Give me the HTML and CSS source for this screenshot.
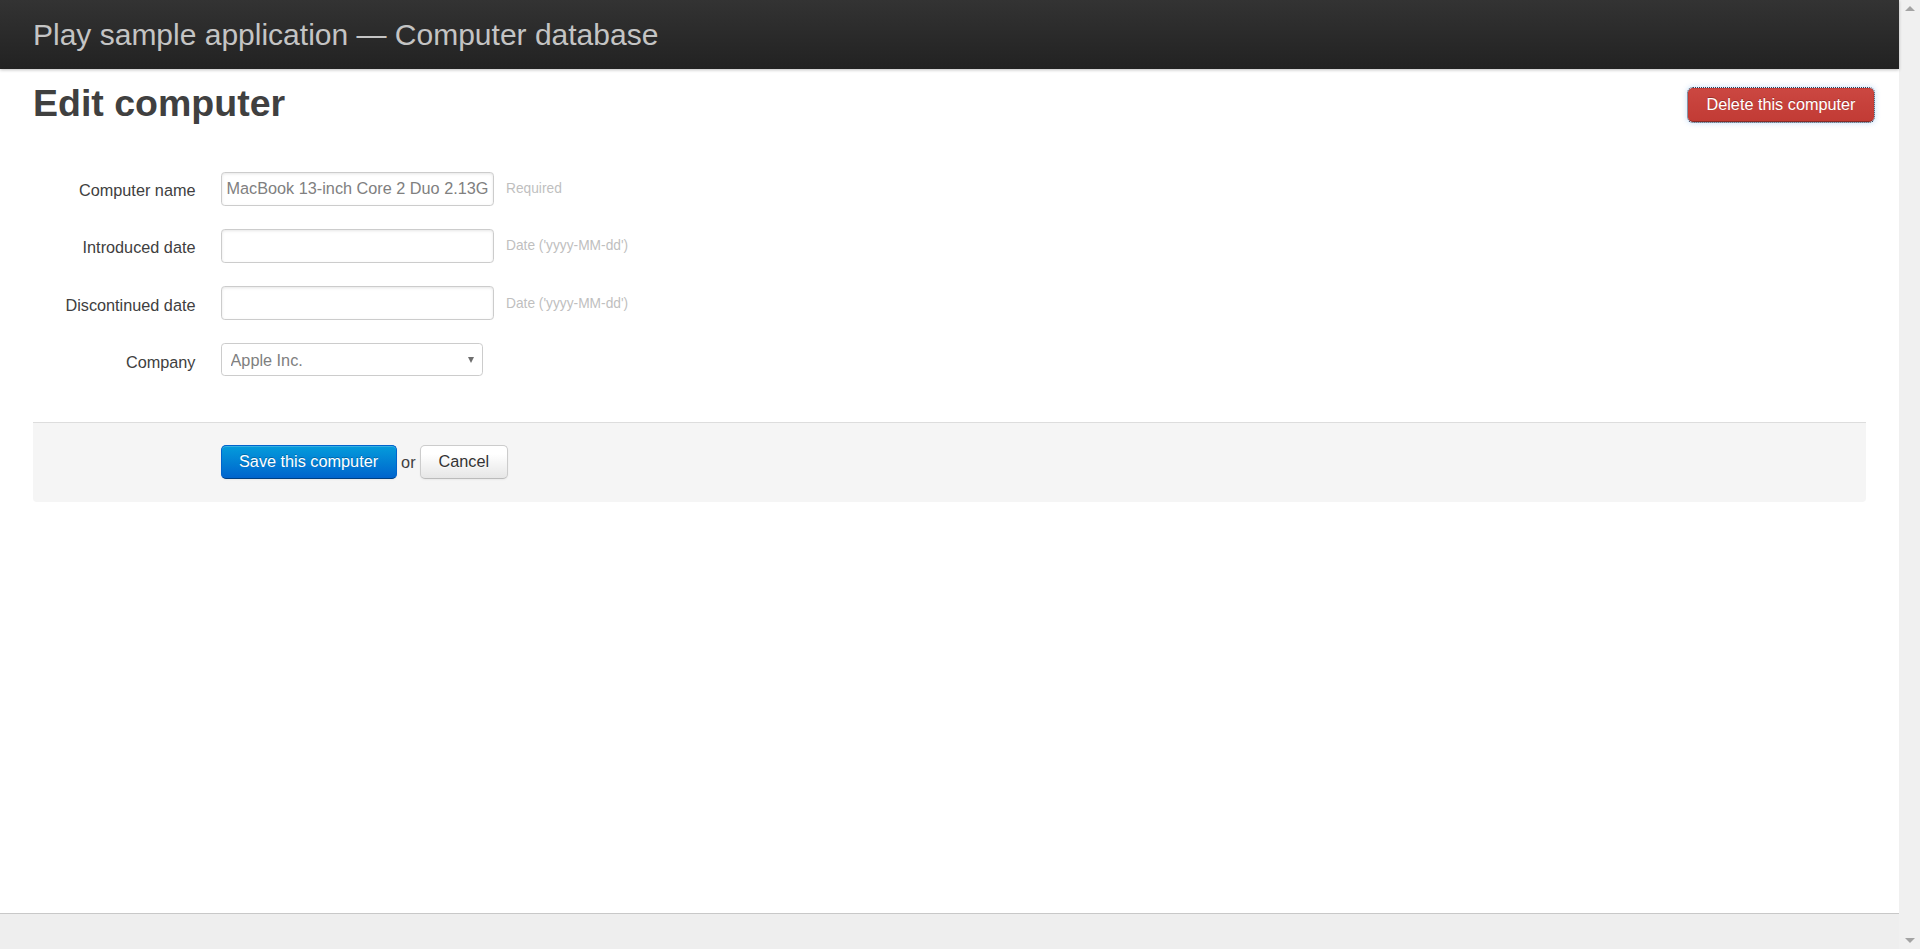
FILE: index.html
```html
<!DOCTYPE html>
<html lang="en">
<head>
<meta charset="utf-8">
<title>Computers database</title>
<link rel="stylesheet" href="styles.css">
</head>
<body>
<div class="page">
  <header class="topbar">
    <h1 class="brand">Play sample application — Computer database</h1>
  </header>
  <main class="main">
    <div class="title-row">
      <h1 class="page-title">Edit computer</h1>
      <form class="delete-form">
        <button type="button" class="btn danger focused">Delete this computer</button>
      </form>
    </div>
    <form class="edit-form">
      <fieldset class="fields">
        <div class="field-row">
          <label class="field-label" for="name">Computer name</label>
          <div class="field-input">
            <input class="text-input" type="text" id="name" value="MacBook 13-inch Core 2 Duo 2.13GHz">
            <span class="help-inline">Required</span>
          </div>
        </div>
        <div class="field-row">
          <label class="field-label" for="introduced">Introduced date</label>
          <div class="field-input">
            <input class="text-input" type="text" id="introduced" value="">
            <span class="help-inline">Date ('yyyy-MM-dd')</span>
          </div>
        </div>
        <div class="field-row">
          <label class="field-label" for="discontinued">Discontinued date</label>
          <div class="field-input">
            <input class="text-input" type="text" id="discontinued" value="">
            <span class="help-inline">Date ('yyyy-MM-dd')</span>
          </div>
        </div>
        <div class="field-row">
          <label class="field-label" for="company">Company</label>
          <div class="field-input">
            <div class="select-wrap">
              <select class="select-input" id="company">
                <option>Apple Inc.</option>
              </select>
              <span class="select-arrow"></span>
            </div>
          </div>
        </div>
      </fieldset>
      <div class="actions">
        <button type="button" class="btn primary">Save this computer</button> <span class="or">or</span> <button type="button" class="btn">Cancel</button>
      </div>
    </form>
  </main>
  <footer class="bottombar"></footer>
</div>
<div class="scrollbar">
  <span class="sb-arrow sb-up"></span>
  <span class="sb-arrow sb-down"></span>
</div>
</body>
</html>
```

FILE: styles.css
```css
html, body {
  margin: 0;
  padding: 0;
  height: 100%;
}
body {
  display: flex;
  flex-direction: row;
  font-family: "Liberation Sans", Arial, sans-serif;
  font-size: 16.25px;
  color: #404040;
  background: #fff;
  overflow: hidden;
}
.page {
  flex: 1;
  display: flex;
  flex-direction: column;
  min-width: 0;
  height: 100vh;
}
.topbar {
  height: 69px;
  flex: 0 0 69px;
  background: linear-gradient(to bottom, #333333, #222222);
  box-shadow: 0 1px 3px rgba(0,0,0,0.25);
  padding: 0 33px;
  position: relative;
  z-index: 1;
}
.brand {
  margin: 0;
  font-size: 30px;
  font-weight: normal;
  line-height: 69px;
  color: #c4c4c4;
  white-space: nowrap;
}
.main {
  flex: 1;
  padding: 12px 33px 0 33px;
}
.title-row {
  display: flex;
  justify-content: space-between;
  align-items: flex-start;
  height: 45px;
}
.page-title {
  margin: 0;
  font-size: 37.5px;
  line-height: 45px;
  font-weight: bold;
  color: #404040;
}
.delete-form {
  margin: 7px -8px 0 0;
}
.btn {
  font-family: "Liberation Sans", Arial, sans-serif;
  font-size: 16.25px;
  line-height: 18.75px;
  height: 34px;
  padding: 6px 17.5px 7px;
  border: 1px solid #ccc;
  border-bottom-color: #bbb;
  border-radius: 5px;
  color: #333;
  background-color: #e6e6e6;
  background-image: linear-gradient(to bottom, #ffffff, #ffffff 25%, #e6e6e6);
  box-shadow: inset 0 1px 0 rgba(255,255,255,0.2), 0 1px 2px rgba(0,0,0,0.05);
  text-shadow: 0 1px 1px rgba(255,255,255,0.75);
  cursor: pointer;
  vertical-align: middle;
  white-space: nowrap;
}
.btn.primary {
  color: #fff;
  background-color: #0064cd;
  background-image: linear-gradient(to bottom, #049cdb, #0064cd);
  border-color: #0064cd #0064cd #003f81;
  text-shadow: 0 -1px 0 rgba(0,0,0,0.25);
}
.btn.danger {
  color: #fff;
  background-color: #c43c35;
  background-image: linear-gradient(to bottom, #cb4741, #c23b35);
  border-color: #c43c35 #c43c35 #882a25;
  text-shadow: 0 -1px 0 rgba(0,0,0,0.25);
}
.btn.focused {
  outline: 1px dotted #2c3e55;
  outline-offset: 0;
  box-shadow: 0 0 5px 2px rgba(120,180,240,0.3);
}
.edit-form {
  margin: 45.5px 0 0 0;
}
.fields {
  border: 0;
  margin: 0;
  padding: 0;
}
.field-row {
  display: flex;
  align-items: flex-start;
  margin-bottom: 23.3px;
}
.field-label {
  width: 162.5px;
  flex: 0 0 162.5px;
  padding-top: 7.5px;
  line-height: 22.5px;
  text-align: right;
  color: #404040;
}
.field-input {
  margin-left: 25px;
  display: flex;
  align-items: center;
}
.text-input {
  box-sizing: border-box;
  width: 273.5px;
  height: 34px;
  padding: 0 5px;
  margin: 0;
  border: 1px solid #ccc;
  border-radius: 3.75px;
  font-family: "Liberation Sans", Arial, sans-serif;
  font-size: 16.25px;
  color: #808080;
  background: #fff;
  box-shadow: inset 0 1px 3px rgba(0,0,0,0.1);
  outline: none;
}
.help-inline {
  margin-left: 12px;
  font-size: 13.75px;
  color: #bfbfbf;
  white-space: nowrap;
}
.select-wrap {
  position: relative;
  width: 262px;
  height: 33px;
}
.select-input {
  -webkit-appearance: none;
  appearance: none;
  box-sizing: border-box;
  width: 262px;
  height: 33px;
  margin: 0;
  padding: 0 20px 0 9px;
  border: 1px solid #ccc;
  border-radius: 3.75px;
  background: #fff;
  font-family: "Liberation Sans", Arial, sans-serif;
  font-size: 16.25px;
  color: #808080;
  outline: none;
}
.select-arrow {
  position: absolute;
  right: 9px;
  top: 14px;
  width: 0;
  height: 0;
  border-left: 3.5px solid transparent;
  border-right: 3.5px solid transparent;
  border-top: 6px solid #6e6e6e;
  pointer-events: none;
}
.actions {
  margin-top: 22.7px;
  padding: 21.5px 20px 23.5px 187.5px;
  background: #f5f5f5;
  border-top: 1px solid #ddd;
  border-radius: 0 0 3.75px 3.75px;
  height: 34px;
  display: flex;
  align-items: center;
}
.actions .or {
  margin: 0 4.5px;
  color: #404040;
  line-height: 34px;
}
.bottombar {
  height: 36px;
  flex: 0 0 36px;
  box-sizing: border-box;
  background: #eeeeee;
  border-top: 1px solid #c8c8c8;
}
.scrollbar {
  width: 21px;
  flex: 0 0 21px;
  height: 100vh;
  background: #f0f0f0;
  display: flex;
  flex-direction: column;
  justify-content: space-between;
  align-items: center;
  padding: 6px 0;
  box-sizing: border-box;
}
.sb-arrow {
  width: 0;
  height: 0;
  border-left: 5px solid transparent;
  border-right: 5px solid transparent;
}
.sb-up {
  border-bottom: 5px solid #a3a3a3;
}
.sb-down {
  border-top: 5px solid #a3a3a3;
}
```
